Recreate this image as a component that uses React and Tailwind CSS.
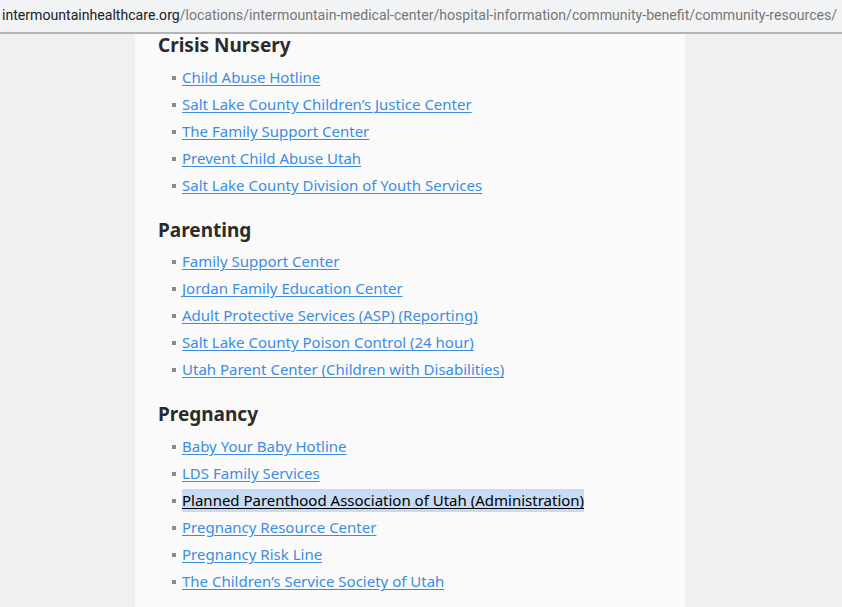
import React from "react";

const sections = [
  {
    title: "Crisis Nursery",
    links: [
      "Child Abuse Hotline",
      "Salt Lake County Children’s Justice Center",
      "The Family Support Center",
      "Prevent Child Abuse Utah",
      "Salt Lake County Division of Youth Services",
    ],
  },
  {
    title: "Parenting",
    links: [
      "Family Support Center",
      "Jordan Family Education Center",
      "Adult Protective Services (ASP) (Reporting)",
      "Salt Lake County Poison Control (24 hour)",
      "Utah Parent Center (Children with Disabilities)",
    ],
  },
  {
    title: "Pregnancy",
    links: [
      "Baby Your Baby Hotline",
      "LDS Family Services",
      "Planned Parenthood Association of Utah (Administration)",
      "Pregnancy Resource Center",
      "Pregnancy Risk Line",
      "The Children’s Service Society of Utah",
    ],
  },
];

const selected = "Planned Parenthood Association of Utah (Administration)";

export default function App() {
  return (
    <div className="w-[842px] h-[607px] overflow-hidden bg-[#f0f0f0] flex flex-col">
      <div className="h-[34px] shrink-0 bg-[#f1f3f4] border-b-2 border-[#b5b5b5] flex items-center px-[2px] font-['Roboto',sans-serif] text-[14.1px] whitespace-nowrap">
        <span className="text-[#202124]">intermountainhealthcare.org</span>
        <span className="text-[#777]">/locations/intermountain-medical-center/hospital-information/community-benefit/community-resources/</span>
      </div>
      <div className="flex-1 ml-[135px] w-[550px] bg-[#fafafa] pl-[23px] font-['Noto_Sans',sans-serif] overflow-hidden">
        {sections.map((s, i) => (
          <section key={s.title} className={i === 0 ? "-mt-[3px]" : "mt-[17px]"}>
            <h2
              className={
                "text-[19px] font-bold text-[#2b2b2b] leading-[28px] " +
                (i === 1 ? "mb-[4px]" : "mb-[5px]")
              }
            >
              {s.title}
            </h2>
            <ul>
              {s.links.map((l) => (
                <li key={l} className="flex items-center h-[27px] pl-[14px] text-[15px]">
                  <span className="w-[4px] h-[4px] bg-[#8a8a8a] mr-[6px] shrink-0" />
                  <a
                    href="#"
                    className={
                      l === selected
                        ? "text-black underline bg-[#c6dcf4] underline-offset-2"
                        : "text-[#3a8de4] underline underline-offset-2"
                    }
                  >
                    {l}
                  </a>
                </li>
              ))}
            </ul>
          </section>
        ))}
      </div>
    </div>
  );
}
